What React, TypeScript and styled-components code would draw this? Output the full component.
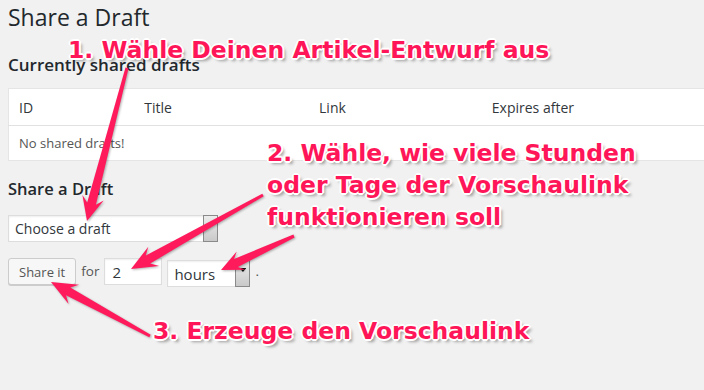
import React from 'react';
import styled, { createGlobalStyle } from 'styled-components';

const GlobalStyle = createGlobalStyle`
  html, body {
    margin: 0;
    padding: 0;
    background: #f1f1f1;
    overflow: hidden;
  }
  * { box-sizing: border-box; }
`;

const Page = styled.div`
  position: relative;
  width: 704px;
  height: 390px;
  padding: 3px 0 0 8px;
  font-family: "Open Sans", "Noto Sans", sans-serif;
  color: #23282d;
  overflow: hidden;
`;

const Title = styled.h1`
  margin: 0;
  font-size: 23px;
  font-weight: 400;
  line-height: 29px;
`;

const SectionTitle = styled.h2`
  margin: 22px 0 12px;
  font-size: 17px;
  font-weight: 600;
  line-height: 22px;
`;

const SubTitle = styled.h3`
  margin: 18px 0 16px;
  font-size: 16.5px;
  font-weight: 600;
  line-height: 20px;
`;

const Table = styled.table`
  width: 720px;
  border-collapse: collapse;
  background: #fff;
  border: 1px solid #e5e5e5;
`;

const HeadCell = styled.th<{ $w: number }>`
  width: ${p => p.$w}px;
  height: 37px;
  padding: 0 10px;
  text-align: left;
  font-weight: 400;
  font-size: 14px;
  color: #32373c;
  border-bottom: 1px solid #e1e1e1;
`;

const Cell = styled.td`
  height: 35px;
  padding: 0 10px;
  font-size: 13px;
  color: #555;
`;

const FormRow = styled.div`
  display: flex;
  align-items: flex-start;
  gap: 5px;
  height: 29px;
  margin-bottom: 14px;
  font-size: 14px;
  color: #555;
`;

const Label = styled.span`
  font-size: 13.5px;
  line-height: 27px;
`;

const SelectBox = styled.div<{ $w: number; $top?: number }>`
  display: flex;
  align-items: stretch;
  width: ${p => p.$w}px;
  height: 27px;
  margin-top: ${p => p.$top ?? 0}px;
  background: #fff;
  border: 1px solid #ddd;
  box-shadow: inset 0 1px 2px rgba(0, 0, 0, 0.07);
`;

const SelectText = styled.span<{ $size?: number }>`
  flex: 1;
  display: flex;
  align-items: center;
  padding-left: 6px;
  font-size: ${p => p.$size ?? 14}px;
  color: #32373c;
`;

const SelectArrow = styled.span`
  position: relative;
  width: 15px;
  margin: -1px -1px -1px 0;
  border: 1px solid #8a8a8a;
  background: linear-gradient(#ececec, #c9c9c9);
  &::after {
    content: '';
    position: absolute;
    left: 3px;
    top: 7px;
    width: 7px;
    height: 4px;
    background: #111;
    clip-path: polygon(0 0, 100% 0, 50% 100%);
  }
`;

const Button = styled.button`
  height: 27px;
  padding: 0 10px;
  font-family: inherit;
  font-size: 13px;
  color: #555;
  background: #f7f7f7;
  border: 1px solid #ccc;
  border-radius: 3px;
  box-shadow: 0 1px 0 #ccc;
`;

const NumberInput = styled.div`
  width: 58px;
  height: 27px;
  background: #fff;
  border: 1px solid #ddd;
  box-shadow: inset 0 1px 2px rgba(0, 0, 0, 0.07);
  padding-left: 7px;
  display: flex;
  align-items: center;
  font-size: 15px;
  color: #32373c;
`;

const Note = styled.div<{ $x: number; $y: number }>`
  position: absolute;
  left: ${p => p.$x}px;
  top: ${p => p.$y}px;
  font-family: "DejaVu Sans", Verdana, sans-serif;
  font-weight: 700;
  font-size: 23.5px;
  line-height: 32px;
  white-space: nowrap;
  color: #ff1658;
  text-shadow:
    -1px -1px 0 #fff, 1px -1px 0 #fff, -1px 1px 0 #fff, 1px 1px 0 #fff,
    0 -2px 0 #fff, 0 2px 0 #fff, -2px 0 0 #fff, 2px 0 0 #fff,
    3px 3px 3px rgba(0, 0, 0, 0.35);
`;

const Overlay = styled.svg`
  position: absolute;
  left: 0;
  top: 0;
  pointer-events: none;
  filter: drop-shadow(1px 1px 1px rgba(0, 0, 0, 0.3));
`;

type Arrow = { from: [number, number]; to: [number, number]; head: number; wide: number };

const arrows: Arrow[] = [
  { from: [127, 68], to: [87, 221], head: 24, wide: 22 },
  { from: [263, 195], to: [131, 269], head: 26, wide: 22 },
  { from: [294, 236], to: [221, 270], head: 22, wide: 20 },
  { from: [150, 336], to: [51, 282], head: 26, wide: 22 },
];

const arrowPoints = ({ from, to, head, wide }: Arrow) => {
  const dx = to[0] - from[0];
  const dy = to[1] - from[1];
  const len = Math.hypot(dx, dy);
  const ux = dx / len, uy = dy / len;
  const nx = -uy, ny = ux;
  const neck = [to[0] - ux * head * 0.75, to[1] - uy * head * 0.75];
  const wing = [to[0] - ux * head, to[1] - uy * head];
  const pts = [
    [from[0] + nx * 1.5, from[1] + ny * 1.5],
    [neck[0] + nx * 4.5, neck[1] + ny * 4.5],
    [wing[0] + nx * wide / 2, wing[1] + ny * wide / 2],
    to,
    [wing[0] - nx * wide / 2, wing[1] - ny * wide / 2],
    [neck[0] - nx * 4.5, neck[1] - ny * 4.5],
    [from[0] - nx * 1.5, from[1] - ny * 1.5],
  ];
  return pts.map(p => p.map(v => v.toFixed(1)).join(',')).join(' ');
};

export default function App() {
  return (
    <>
      <GlobalStyle />
      <Page>
        <Title>Share a Draft</Title>
        <SectionTitle>Currently shared drafts</SectionTitle>
        <Table>
          <thead>
            <tr>
              <HeadCell $w={126}>ID</HeadCell>
              <HeadCell $w={175}>Title</HeadCell>
              <HeadCell $w={173}>Link</HeadCell>
              <HeadCell $w={246}>Expires after</HeadCell>
            </tr>
          </thead>
          <tbody>
            <tr>
              <Cell colSpan={4}>No shared drafts!</Cell>
            </tr>
          </tbody>
        </Table>
        <SubTitle>Share a Draft</SubTitle>
        <FormRow>
          <SelectBox $w={210}>
            <SelectText>Choose a draft</SelectText>
            <SelectArrow />
          </SelectBox>
        </FormRow>
        <FormRow>
          <Button>Share it</Button>
          <Label>for</Label>
          <NumberInput>2</NumberInput>
          <SelectBox $w={83} $top={2}>
            <SelectText $size={15}>hours</SelectText>
            <SelectArrow />
          </SelectBox>
          <Label>.</Label>
        </FormRow>

        <Overlay width={704} height={390}>
          {arrows.map((a, i) => (
            <polygon key={i} points={arrowPoints(a)} fill="#ff1a5c" />
          ))}
        </Overlay>

        <Note $x={68} $y={34}>1. Wähle Deinen Artikel-Entwurf aus</Note>
        <Note $x={267} $y={137}>
          2. Wähle, wie viele Stunden<br />
          oder Tage der Vorschaulink<br />
          funktionieren soll
        </Note>
        <Note $x={153} $y={315}>3. Erzeuge den Vorschaulink</Note>
      </Page>
    </>
  );
}
